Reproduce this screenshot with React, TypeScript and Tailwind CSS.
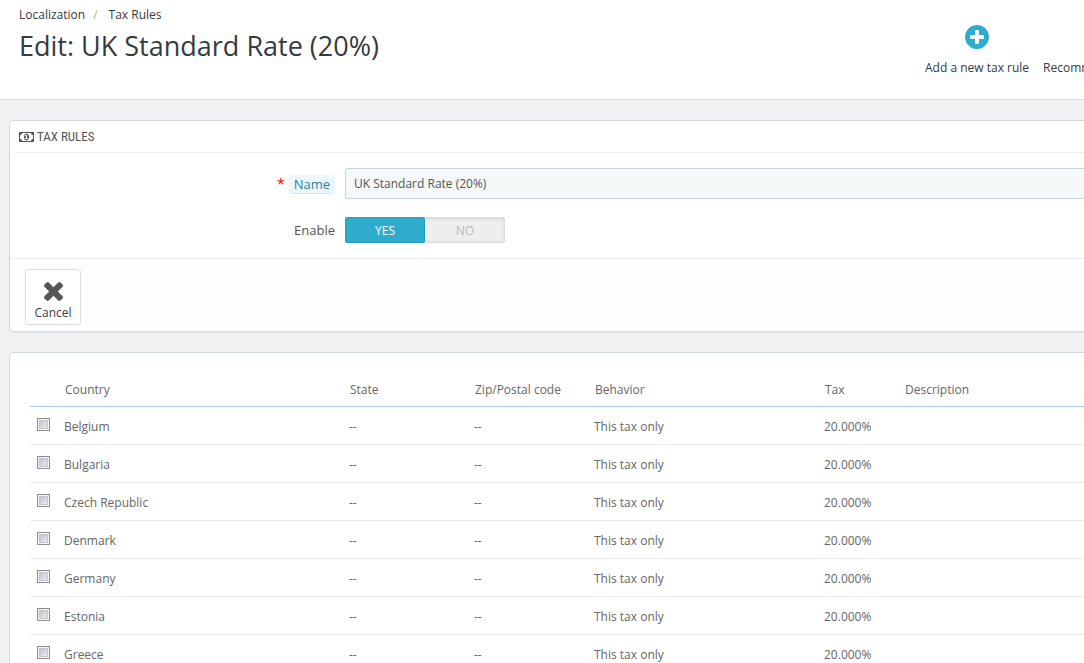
import { useState } from "react";

const COUNTRIES = ["Belgium", "Bulgaria", "Czech Republic", "Denmark", "Germany", "Estonia", "Greece"];

function PlusCircleIcon() {
  return (
    <svg viewBox="128 128 1536 1536" className="size-6 fill-[#2eacce]" aria-hidden="true">
      <path d="M1344 960v-128q0-26-19-45t-45-19h-256v-256q0-26-19-45t-45-19h-128q-26 0-45 19t-19 45v256h-256q-26 0-45 19t-19 45v128q0 26 19 45t45 19h256v256q0 26 19 45t45 19h128q26 0 45-19t19-45v-256h256q26 0 45-19t19-45zm320-64q0 209-103 385.5t-279.5 279.5-385.5 103-385.5-103-279.5-279.5-103-385.5 103-385.5 279.5-279.5 385.5-103 385.5 103 279.5 279.5 103 385.5z" />
    </svg>
  );
}

function MoneyIcon() {
  return (
    <svg viewBox="0 256 1920 1280" className="h-[10px] w-[15px] fill-[#555]" aria-hidden="true">
      <path d="M768 1152h384v-96h-128v-448h-114l-148 137 77 80q42-37 55-57h2v288h-128v96zm512-256q0 70-21 142t-59.5 134-101.5 101-138 39-138-39-101.5-101-59.5-134-21-142 21-142 59.5-134 101.5-101 138-39 138 39 101.5 101 59.5 134 21 142zm512 256v-512q-106 0-181-75t-75-181h-1152q0 106-75 181t-181 75v512q106 0 181 75t75 181h1152q0-106 75-181t181-75zm128-832v1152q0 26-19 45t-45 19h-1792q-26 0-45-19t-19-45v-1152q0-26 19-45t45-19h1792q26 0 45 19t19 45z" />
    </svg>
  );
}

function TimesIcon() {
  return (
    <svg viewBox="302 366 1188 1188" className="size-[19px] fill-[#555]" aria-hidden="true">
      <path d="M1490 1322q0 40-28 68l-136 136q-28 28-68 28t-68-28l-294-294-294 294q-28 28-68 28t-68-28l-136-136q-28-28-28-68t28-68l294-294-294-294q-28-28-28-68t28-68l136-136q28-28 68-28t68 28l294 294 294-294q28-28 68-28t68 28l136 136q28 28 28 68t-28 68l-294 294 294 294q28 28 28 68z" />
    </svg>
  );
}

function PageHeader() {
  return (
    <header className="flex h-[100px] justify-between overflow-hidden border-b border-[#d9dbdd] bg-white text-[#363a41]">
      <div className="pt-[6px] pl-[19px]">
        <nav aria-label="Breadcrumb" className="flex gap-2 leading-[18px]">
          <a href="#localization">Localization</a>
          <span className="pr-[3px] text-[#a5b85c]">/</span>
          <a href="#tax-rules">Tax Rules</a>
        </nav>
        <h1 className="mt-1 text-[27px] leading-9 whitespace-nowrap">Edit: UK Standard Rate (20%)</h1>
      </div>
      <div className="flex w-[159px] shrink-0 gap-[14px] pt-[25px]">
        <a href="#add" className="flex shrink-0 flex-col items-center whitespace-nowrap">
          <PlusCircleIcon />
          <span className="mt-[10px] leading-[18px]">Add a new tax rule</span>
        </a>
        <a href="#modules" className="mt-[34px] shrink-0 leading-[18px] whitespace-nowrap">
          Recommended
        </a>
      </div>
    </header>
  );
}

function EnableSwitch() {
  const [enabled, setEnabled] = useState(true);
  const base = "flex h-full w-1/2 cursor-pointer items-center justify-center rounded-[3px] pt-px";
  const on = "bg-[#2eacce] text-white shadow-[inset_0_0_0_1px_#279dbd]";
  const off = "text-[#bbb]";
  return (
    <div
      role="radiogroup"
      aria-labelledby="enable-label"
      className="flex h-[26px] w-40 rounded-[3px] bg-[#eee] shadow-[inset_0_0_0_1px_#ddd,inset_0_1px_5px_rgba(0,0,0,0.15)]"
    >
      <label className={`${base} ${enabled ? on : off}`}>
        <input type="radio" name="enable" className="sr-only" checked={enabled} onChange={() => setEnabled(true)} />
        YES
      </label>
      <label className={`${base} ${enabled ? off : on}`}>
        <input type="radio" name="enable" className="sr-only" checked={!enabled} onChange={() => setEnabled(false)} />
        NO
      </label>
    </div>
  );
}

function TaxRulesForm() {
  return (
    <form className="rounded-l-[5px] border border-r-0 border-[#d3d8db] bg-white shadow-[0_1px_1px_rgba(0,0,0,0.06)]">
      <h2 className="ml-1 flex h-8 items-center gap-[3px] border-b border-[#eee] pt-px pl-[5px] font-['Roboto_Condensed','Liberation_Sans_Narrow',sans-serif] text-[13px] leading-5 text-[#555]">
        <MoneyIcon />
        TAX RULES
      </h2>
      <div className="grid grid-cols-[325px_1fr] items-center gap-x-[10px] pt-[15px] pb-[15px] text-[#555]">
        <div className="flex items-center justify-end gap-1 pt-px">
          <span className="text-[14px] leading-5 text-[#f00]">*</span>
          <label htmlFor="name" className="rounded-[3px] border-b border-[#d5e9f1] bg-[#edf7fb] px-[5px] text-[13px] leading-[18px] text-[#2b7fae]">
            Name
          </label>
        </div>
        <input
          id="name"
          defaultValue="UK Standard Rate (20%)"
          className="h-[31px] w-full rounded-l-[3px] border border-r-0 border-[#c7d6db] bg-[#f5f8f9] px-2 text-[12px] text-[#555] outline-none"
        />
        <div id="enable-label" className="mt-[18px] pt-px text-right text-[13px]">
          Enable
        </div>
        <div className="mt-[18px]">
          <EnableSwitch />
        </div>
      </div>
      <div className="rounded-bl-[5px] border-t border-[#eee] bg-[#fcfdfe] px-[15px] pt-[10px] pb-[6px]">
        <button
          type="button"
          className="flex size-14 cursor-pointer flex-col items-center rounded-[3px] border border-[#ddd] bg-white pt-[12px] text-[#363a41]"
        >
          <TimesIcon />
          <span className="mt-[3px] leading-[18px]">Cancel</span>
        </button>
      </div>
    </form>
  );
}

function RulesTable() {
  return (
    <section className="rounded-l-[5px] border border-r-0 border-[#d3d8db] bg-white pt-5 pl-5 text-[#666]">
      <table className="w-full table-fixed border-separate border-spacing-0">
        <colgroup>
          <col className="w-[30px]" />
          <col className="w-[285px]" />
          <col className="w-[125px]" />
          <col className="w-[120px]" />
          <col className="w-[230px]" />
          <col className="w-[80px]" />
          <col />
        </colgroup>
        <thead>
          <tr className="h-[34px] text-left *:border-b *:border-[#a0d0eb] *:px-[5px] *:pt-px *:font-normal">
            <td />
            <th>Country</th>
            <th>State</th>
            <th>Zip/Postal code</th>
            <th>Behavior</th>
            <th>Tax</th>
            <th>Description</th>
          </tr>
        </thead>
        <tbody>
          {COUNTRIES.map((country) => (
            <tr key={country} className="h-[38px] *:border-b *:border-[#eaedef] *:px-1 *:pt-[3px]">
              <td>
                <input
                  type="checkbox"
                  aria-label={country}
                  className="mb-[5px] ml-[3px] block size-[13px] appearance-none border border-[#8e8f8f] bg-linear-to-br from-[#b4b9c2] to-[#f6f6f6] shadow-[inset_0_0_0_1px_#f4f4f4,inset_0_0_0_2px_#c3c7cd] checked:to-[#2eacce]"
                />
              </td>
              <td>{country}</td>
              <td>--</td>
              <td>--</td>
              <td>This tax only</td>
              <td>20.000%</td>
              <td />
            </tr>
          ))}
        </tbody>
      </table>
    </section>
  );
}

export default function App() {
  return (
    <div className="min-h-screen overflow-x-hidden bg-[#eff1f2] font-['Open_Sans',sans-serif] text-[12px]">
      <PageHeader />
      <main className="flex flex-col gap-5 pt-5 pl-[9px]">
        <TaxRulesForm />
        <RulesTable />
      </main>
    </div>
  );
}
